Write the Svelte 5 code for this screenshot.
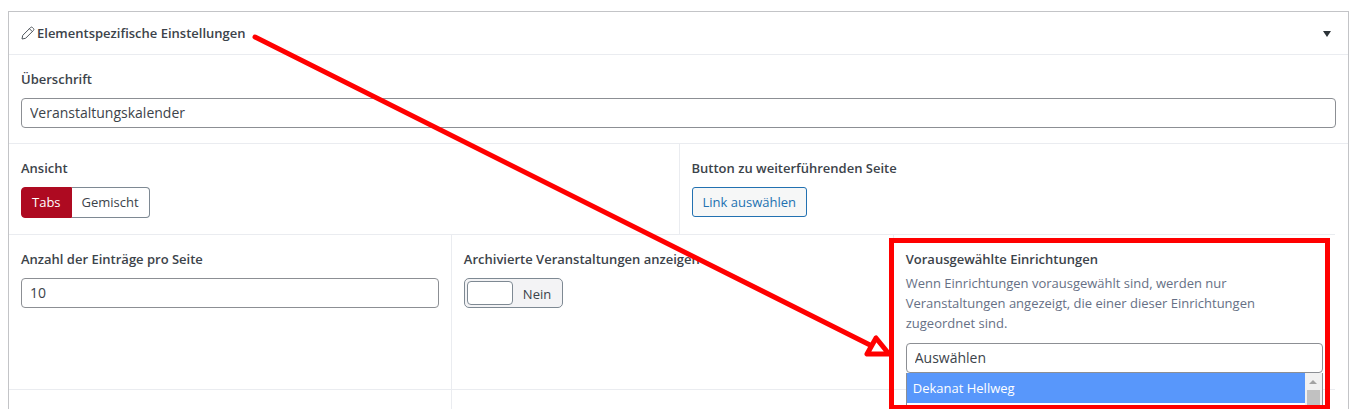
<!-- Element settings panel: heading, view, page size, archive switch and the
     facility picker, with the marker drawn over the picker. -->
<script lang="ts">
  let open = $state(true);
  let heading = $state("Veranstaltungskalender");
  let view = $state("Tabs");
  let perPage = $state("10");
  let archived = $state(false);
  let facility = $state("Auswählen");

  const views = ["Tabs", "Gemischt"];
  const facilities = ["Dekanat Hellweg"];
</script>

<main class="page">
  <section class="panel">
    <header class="head">
      <h2>
        <svg class="pencil" viewBox="0 0 14 14" aria-hidden="true">
          <path d="M1 13 1.7 9.4 9.5 1.6a1.5 1.5 0 0 1 2.1 0l.8.8a1.5 1.5 0 0 1 0 2.1L4.6 12.3 1 13Z" />
          <path d="M8.4 2.7 11.3 5.6" />
        </svg>
        Elementspezifische Einstellungen
      </h2>
      <button type="button" class="fold" aria-label="Einklappen" aria-expanded={open} onclick={() => (open = !open)}>
        <svg viewBox="0 0 8 6" aria-hidden="true"><path d="M0 0H8L4 6Z" /></svg>
      </button>
    </header>

    {#if open}
      <div class="row first">
        <div class="field full">
          <label class="label" for="heading">Überschrift</label>
          <input id="heading" class="text" type="text" bind:value={heading} />
        </div>
      </div>

      <div class="row">
        <fieldset class="field half">
          <legend class="label">Ansicht</legend>
          <div class="group">
            {#each views as name}
              <label class:selected={view === name}>
                <input class="hidden" type="radio" name="view" value={name} bind:group={view} />
                {name}
              </label>
            {/each}
          </div>
        </fieldset>
        <div class="field half">
          <div class="label">Button zu weiterführenden Seite</div>
          <button type="button" class="link">Link auswählen</button>
        </div>
      </div>

      <div class="row">
        <div class="field third">
          <label class="label" for="per-page">Anzahl der Einträge pro Seite</label>
          <input id="per-page" class="text" type="text" inputmode="numeric" bind:value={perPage} />
        </div>
        <div class="field third">
          <label class="label" for="archived">Archivierte Veranstaltungen anzeigen</label>
          <label class="switch" class:on={archived}>
            <input id="archived" class="hidden" type="checkbox" bind:checked={archived} />
            <span class="knob"></span>
            <span class="state">{archived ? "Ja" : "Nein"}</span>
          </label>
        </div>
        <div class="field third">
          <label class="label tight" for="facility">Vorausgewählte Einrichtungen</label>
          <p class="hint">
            Wenn Einrichtungen vorausgewählt sind, werden nur Veranstaltungen angezeigt, die einer dieser
            Einrichtungen zugeordnet sind.
          </p>
          <div class="picker">
            <input id="facility" class="text" type="text" bind:value={facility} />
            <div class="menu">
              <div class="options">
                {#each facilities as name}
                  <button type="button" class="option" onclick={() => (facility = name)}>{name}</button>
                {/each}
              </div>
              <div class="scroll">
                <svg viewBox="0 0 8 4" aria-hidden="true"><path d="M0 4 4 0 8 4Z" /></svg>
                <span class="thumb"></span>
              </div>
            </div>
          </div>
        </div>
      </div>

      <div class="row rest">
        <div class="field third"></div>
        <div class="field third"></div>
        <div class="field third"></div>
      </div>
    {/if}
  </section>

  <svg class="marker" width="1355" height="409" aria-hidden="true">
    <path d="M255 37 870 345" stroke-width="5" stroke-linecap="round" />
    <path d="M876 338 867 354H889Z" stroke-width="5" stroke-linejoin="round" />
    <rect x="891.5" y="240.5" width="436" height="167" stroke-width="5" />
  </svg>
</main>

<style>
  :global(body) {
    background: #fff;
  }
  .page,
  .page * {
    box-sizing: border-box;
  }
  .page {
    position: relative;
    display: flex;
    height: 100vh;
    min-height: 400px;
    padding: 11px 6px 0 8px;
    overflow: hidden;
    color: #3c434a;
    font: 13px/18px "Open Sans", "Noto Sans", sans-serif;
  }
  input,
  button {
    font: inherit;
    color: inherit;
  }
  .panel {
    display: flex;
    flex: 1;
    flex-direction: column;
    border: 1px solid #c3c4c7;
    border-bottom: 0;
  }
  .head {
    display: flex;
    flex: none;
    align-items: center;
    justify-content: space-between;
    height: 43px;
    padding: 0 12px;
    border-bottom: 1px solid #eaecf0;
  }
  h2 {
    display: flex;
    align-items: center;
    gap: 2px;
    margin: 0;
    font-size: 13px;
    font-weight: 600;
  }
  .pencil {
    width: 14px;
    height: 14px;
    fill: none;
    stroke: #50575e;
  }
  .fold {
    display: flex;
    padding: 6px 5px 4px;
    border: 0;
    background: none;
    cursor: pointer;
  }
  .fold svg {
    width: 8px;
    height: 6px;
    fill: #2c3338;
  }

  .row {
    display: flex;
    flex: none;
  }
  .rest {
    flex: 1;
  }
  .field {
    min-width: 0;
    margin: 0;
    padding: 15px 12px 16px;
    border: 0 solid #eaecf0;
    border-top-width: 1px;
  }
  .first .field {
    padding-bottom: 15px;
    border-top: 0;
  }
  .field + .field {
    border-left-width: 1px;
  }
  .full {
    width: 100%;
  }
  .half {
    width: 50%;
  }
  .third {
    width: 33%;
  }
  .label {
    display: block;
    width: fit-content;
    margin-bottom: 10px;
    padding: 0;
    font-weight: 600;
    white-space: nowrap;
  }
  legend.label {
    float: left;
  }
  .tight {
    margin-bottom: 5px;
  }
  .hint {
    margin: 0 0 10px;
    color: #667085;
    line-height: 20px;
  }
  .text {
    display: block;
    width: 100%;
    height: 30px;
    padding: 0 8px 2px;
    border: 1px solid #8c8f94;
    border-radius: 4px;
    background: #fff;
    font-size: 14px;
  }
  .hidden {
    position: absolute;
    opacity: 0;
    pointer-events: none;
  }

  .group {
    display: flex;
    clear: both;
    width: fit-content;
  }
  .group label {
    padding: 5px 10px 6px;
    border: 1px solid #7e8993;
    border-left: 0;
    cursor: pointer;
  }
  .group label:first-child {
    border-left: 1px solid #7e8993;
    border-radius: 4px 0 0 4px;
  }
  .group label:last-child {
    border-radius: 0 4px 4px 0;
  }
  .group .selected,
  .group .selected:first-child {
    border-color: #ae0a21;
    background: #ae0a21;
    color: #fff;
  }
  .link {
    height: 30px;
    padding: 0 10px;
    border: 1px solid #2271b1;
    border-radius: 3px;
    background: #f6f7f7;
    color: #2271b1;
    cursor: pointer;
  }

  .switch {
    display: flex;
    width: fit-content;
    height: 30px;
    padding: 2px;
    border: 1px solid #7e8993;
    border-radius: 5px;
    background: #f3f3f5;
    cursor: pointer;
  }
  .switch.on {
    flex-direction: row-reverse;
  }
  .knob {
    width: 46px;
    border: 1px solid #7e8993;
    border-radius: 4px;
    background: #fff;
  }
  .state {
    padding: 0 9px 0 10px;
    line-height: 26px;
  }

  .picker {
    position: relative;
  }
  .menu {
    position: absolute;
    top: 100%;
    left: 0;
    display: flex;
    width: 100%;
    height: 200px;
    border: 1px solid #8c8f94;
    border-top: 0;
    background: #fff;
  }
  .options {
    flex: 1;
  }
  .option {
    display: block;
    width: 100%;
    height: 30px;
    padding: 0 6px;
    border: 0;
    background: #5897fb;
    color: #fff;
    font-weight: 500;
    text-align: left;
  }
  .scroll {
    display: flex;
    flex-direction: column;
    align-items: center;
    gap: 6px;
    width: 17px;
    padding-top: 7px;
    background: #f1f1f1;
  }
  .scroll svg {
    flex: none;
    width: 8px;
    height: 4px;
    fill: #a3a3a3;
  }
  .thumb {
    width: 13px;
    height: 60px;
    background: #c1c1c1;
  }

  .marker {
    position: absolute;
    top: 0;
    left: 0;
    fill: none;
    stroke: #f00;
    pointer-events: none;
  }
</style>
